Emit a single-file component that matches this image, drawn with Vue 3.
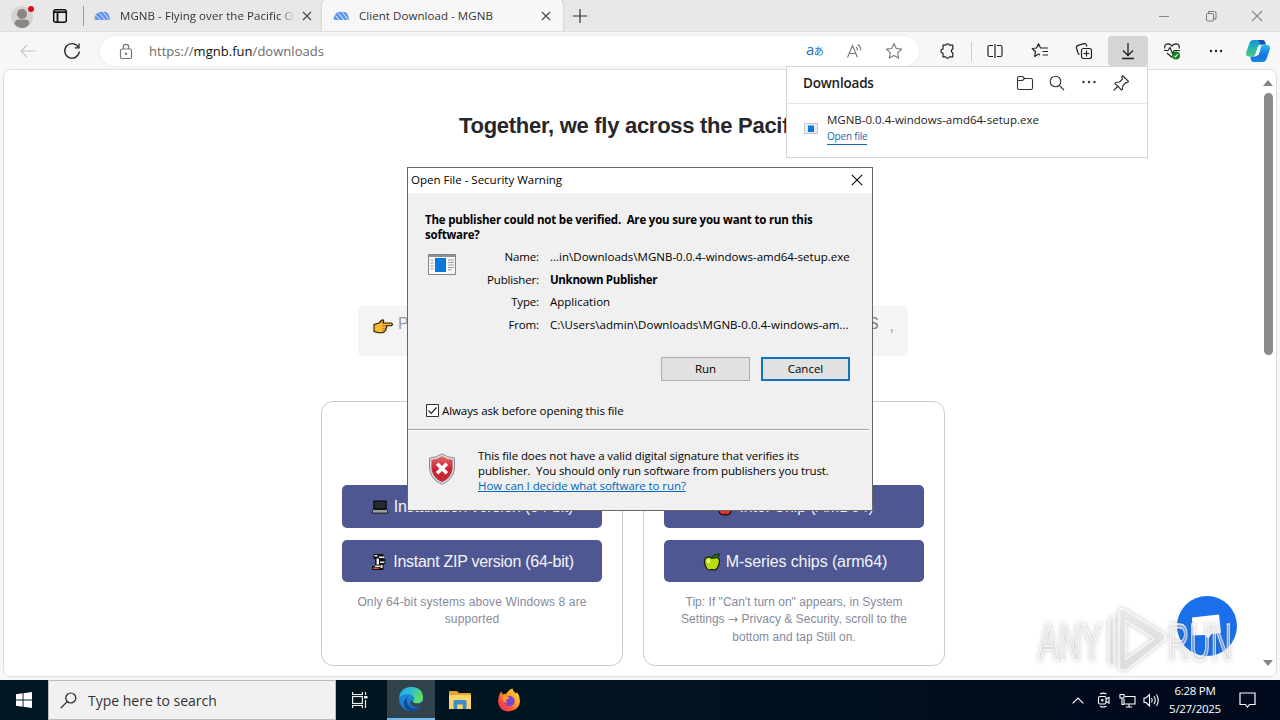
<script setup>
const details = [
  { label: 'Name:', value: '...in\\Downloads\\MGNB-0.0.4-windows-amd64-setup.exe', cls: 'name' },
  { label: 'Publisher:', value: 'Unknown Publisher', cls: 'strong' },
  { label: 'Type:', value: 'Application', cls: 'type' },
  { label: 'From:', value: 'C:\\Users\\admin\\Downloads\\MGNB-0.0.4-windows-am...', cls: 'from' },
]
</script>

<template>
  <div class="screen">
    <header class="tabstrip">
      <svg class="avatar" width="26" height="28" viewBox="0 0 26 28">
        <circle cx="12" cy="15" r="11" fill="#d6d3d1" />
        <circle cx="12" cy="12" r="5" fill="#8c8683" />
        <path d="M4.500 22 q0-4.500 4.500-4.500 h6 q4.500 0 4.500 4.500 q-3 4-7.500 4 t-7.500-4z" fill="#8c8683" />
        <circle cx="21" cy="7" r="3" fill="#e00b1c" />
      </svg>
      <svg class="tabmenu" width="16" height="16" viewBox="0 0 16 16">
        <rect x="1.700" y="1.700" width="12.600" height="12.600" rx="2" fill="none" stroke="#111" stroke-width="1.500" />
        <path d="M1.500 4.200h13M5.500 4v10" stroke="#111" stroke-width="1.800" />
      </svg>
      <i class="sep"></i>
      <div class="tab idle">
        <svg class="fav" width="17" height="10" viewBox="0 0 17 10"><path d="M.5 8.500Q1 2 5.500 1.200 7 .200 9 1.200q2-1.200 4 .3 2.500 2 3 7Q15 9.500 13 8.800 11 9.500 9 8.800 5 9.500.5 8.500z" fill="#5f95ef" /><path d="M2.500 4.500l4 5M5.500 2.500l6 7M9.500 1.500l5.500 7" stroke="#e8e8e8" stroke-width="1" /></svg>
        <span class="tabtitle one">MGNB - Flying over the Pacific O</span>
        <svg class="x" width="10" height="10" viewBox="0 0 10 10"><path d="M1 1l8 8M9 1l-8 8" stroke="#444" stroke-width="1.100" /></svg>
      </div>
      <div class="tab active">
        <svg class="fav" width="17" height="10" viewBox="0 0 17 10"><path d="M.5 8.500Q1 2 5.500 1.200 7 .200 9 1.200q2-1.200 4 .3 2.500 2 3 7Q15 9.500 13 8.800 11 9.500 9 8.800 5 9.500.5 8.500z" fill="#5f95ef" /><path d="M2.500 4.500l4 5M5.500 2.500l6 7M9.500 1.500l5.500 7" stroke="#f7f7f7" stroke-width="1" /></svg>
        <span class="tabtitle two">Client Download - MGNB</span>
        <svg class="x" width="10" height="10" viewBox="0 0 10 10"><path d="M1 1l8 8M9 1l-8 8" stroke="#444" stroke-width="1.100" /></svg>
      </div>
      <svg class="plus" width="14" height="14" viewBox="0 0 14 14"><path d="M7 0v14M0 7h14" stroke="#333" stroke-width="1.200" /></svg>
      <div class="wincontrols">
        <svg width="12" height="12" viewBox="0 0 12 12"><path d="M1 6.500h10" stroke="#888" /></svg>
        <svg width="12" height="12" viewBox="0 0 12 12" fill="none" stroke="#777"><rect x="1.500" y="3.500" width="7" height="7.500" rx="1" /><path d="M3.500 3V1.500h6q1.500 0 1.500 1.500v6h-2" /></svg>
        <svg width="12" height="12" viewBox="0 0 12 12"><path d="M1 1l10 10M11 1L1 11" stroke="#888" stroke-width="1.100" /></svg>
      </div>
    </header>

    <nav class="toolbar">
      <svg class="back" width="16" height="14" viewBox="0 0 16 14" fill="none" stroke="#c6c6c6" stroke-width="1.100"><path d="M7 1L1 7l6 6M1 7h15" /></svg>
      <svg class="reload" width="18" height="18" viewBox="0 0 18 18" fill="none" stroke="#222" stroke-width="1.300"><path d="M15.400 5.300A7.300 7.300 0 1 0 16.300 9.500" /><path d="M16 1.500v4.300h-4.300" /></svg>
      <div class="address">
        <svg class="lock" width="14" height="17" viewBox="0 0 14 17" fill="none" stroke="#777" stroke-width="1.200"><rect x="1.500" y="6" width="11" height="9.500" rx="1.500" /><path d="M4.300 6V4q0-2.600 2.700-2.600T9.700 4v2" /><circle cx="7" cy="10.700" r=".6" fill="#777" /></svg>
        <span class="url">https://<b>mgnb.fun</b>/downloads</span>
        <span class="translate">a<small>あ</small></span>
        <svg class="addricon" width="18" height="16" viewBox="0 0 18 16" fill="none" stroke="#777" stroke-width="1.100"><path d="M1.500 14.500L6.500 2.500l5 12M3.200 10.500h6.600M10 4q1.500 1.300 1.500 3.500M12 1.500q3 2.500 2.800 6" /></svg>
        <svg class="addricon" width="18" height="18" viewBox="0 0 18 18" fill="none" stroke="#777" stroke-width="1.100" stroke-linejoin="round"><path d="M9 1.500l2.300 5 5.300.6-4 3.700 1.100 5.300L9 13.400l-4.700 2.700 1.100-5.300-4-3.700 5.300-.6z" /></svg>
      </div>
      <div class="tools">
        <span class="tool"><svg width="18" height="18" viewBox="0 0 18 18" fill="none" stroke="#222" stroke-width="1.200" stroke-linejoin="round"><path d="M5 3.200h2.700a2 2 0 0 1 3.800 0h3.300v4a1.900 1.900 0 0 0 0 3.700v4h-3.300a2 2 0 0 1-3.800 0H5v-3.700a2 2 0 1 1 0-4.100z" /></svg></span>
        <i class="line"></i>
        <span class="tool"><svg width="18" height="16" viewBox="0 0 18 16" fill="none" stroke="#222" stroke-width="1.200"><path d="M7 2.500H3.500q-1.500 0-1.500 1.500v8q0 1.500 1.500 1.500H7M9 1v14M11 2.500h3.500Q16 2.500 16 4v8q0 1.500-1.500 1.500H11" /></svg></span>
        <span class="tool gap5"><svg width="18" height="18" viewBox="0 0 18 18" fill="none" stroke="#222" stroke-width="1.200" stroke-linejoin="round"><path d="M12 6H9.500L7.500 1.700 5.500 6l-4.300.5 3.300 3.200-.9 4.800 3.900-2.500 1.500 1M11 6h6M11.500 9.500H17M11.500 13H17" /></svg></span>
        <span class="tool gap4"><svg width="18" height="18" viewBox="0 0 18 18" fill="none" stroke="#222" stroke-width="1.200"><rect x="6.500" y="6.500" width="10" height="10" rx="2" /><path d="M11.500 8.500v6M8.500 11.500h6M4.500 12.500q-1.200-.5-1.700-2L1.500 6q-.5-2 1.500-2.600l6-1.700q2-.4 2.600 1.400l.4 1.400" /></svg></span>
        <span class="tool gap4 pressed"><svg width="14" height="18" viewBox="0 0 14 18" fill="none" stroke="#222" stroke-width="1.300"><path d="M7 1v12M2 8.500l5 5 5-5M1 16.500h12" /></svg></span>
        <span class="tool gap4"><svg width="18" height="18" viewBox="0 0 18 18" fill="none" stroke="#222" stroke-width="1.200"><path d="M2 6.500Q.7 2 5 1.800 7.500 1.800 9 4q1.500-2.200 4-2.200Q17.300 2 16 6.500M1 8.500h4l2-3 2.500 6 1.700-3H17M4 11l5 4.500" /><circle cx="13" cy="13.500" r="4" fill="#187a1e" stroke="none" /><path d="M11.200 13.700l1.300 1.200 2.400-2.700" stroke="#d9f0d9" /></svg></span>
        <span class="tool gap4"><svg width="14" height="4" viewBox="0 0 14 4" fill="#222"><circle cx="2" cy="2" r="1.200" /><circle cx="7" cy="2" r="1.200" /><circle cx="12" cy="2" r="1.200" /></svg></span>
        <span class="tool copilot"><svg width="24" height="22" viewBox="0 0 24 22">
          <defs>
            <linearGradient id="cpa" x1="0" y1="0" x2="0" y2="1"><stop offset="0" stop-color="#1a8fd8" /><stop offset=".5" stop-color="#22b8b4" /><stop offset="1" stop-color="#58c878" /></linearGradient>
            <linearGradient id="cpb" x1="0" y1="0" x2="0" y2="1"><stop offset="0" stop-color="#27b8ee" /><stop offset=".6" stop-color="#1672de" /><stop offset="1" stop-color="#1687e4" /></linearGradient>
          </defs>
          <path d="M7.500 0h9q2 0 2.500 2l.8 2.500H15q-2.500 0-3.200 2.500L9.500 14q-.8 2.500-3.500 2.500H3Q-.8 16.500.3 12L3.500 3Q4.500 0 7.500 0z" fill="url(#cpa)" />
          <path d="M16.500 22h-9q-2 0-2.500-2l-.8-3.500H9q2.500 0 3.200-2.500L14.500 7q.8-2 3.500-2h3q3.800 0 2.700 4.500L20.500 19q-1 3-4 3z" fill="url(#cpb)" />
          <path d="M11.800 7h3.300l-2.500 8H9.300z" fill="#fff" />
          <path d="M12 0h4.500q2 0 2.500 2l.8 2.500H14Q13.500 1 12 0z" fill="#1455b4" />
        </svg></span>
      </div>
    </nav>

    <main class="viewport">
      <div class="page">
        <h1>Together, we fly across the Pacific</h1>
        <div class="notice">
          <svg width="20" height="15" viewBox="0 0 20 15"><path d="M1 5.500l5-1.500 3-3q2-.5 1.600 1.500L10 4h8q1.500.3 1.400 1.400T18 6.800h-5q1 .5.700 1.700-.2.700-.8.900.5 2-1.100 2.400-.2 1.900-2 2H5.500L1 12.500z" fill="#fcb92c" stroke="#1a1206" stroke-width="1.100" stroke-linejoin="round" /><path d="M9 6.800h4M9.500 9.400h3M9 11.800h2.500" stroke="#a15a0b" stroke-width=".7" /></svg>
          <span class="first">P</span><span class="last">S</span><span class="comma">,</span>
        </div>
        <div class="cards">
          <section class="card">
            <a class="btn"><svg class="emoji" width="18" height="16" viewBox="0 0 18 16"><path d="M3 2h12v8H3z" fill="#262a31" stroke="#000" stroke-width="1.200" /><path d="M2.500 10.500h13l2 3.500H.500z" fill="#c4c6cb" stroke="#111" /><path d="M3 12h12" stroke="#777" /></svg>Installation version (64-bit)</a>
            <a class="btn"><svg class="emoji" width="18" height="18" viewBox="0 0 18 18"><path d="M3.500 1h10v5h2v5h-2v6H2v-4h3V6H3.500z" fill="#111" /><path d="M4.500 2h3v1.500h-3zM9 3.500h5v1.500H9zM6.500 5.500h2.500v6H6.500zM10 8.500h4.500V10H10zM10.500 12h2v3h-2z" fill="#eceef1" /><path d="M3 14.500h6v1.500H3z" fill="#c9583b" /><path d="M5 12.500h5V14H5z" fill="#e6dcd8" /></svg>Instant ZIP version (64-bit)</a>
            <p>Only 64-bit systems above Windows 8 are<br />supported</p>
          </section>
          <section class="card mac">
            <a class="btn"><svg class="emoji" width="18" height="18" viewBox="0 0 18 18"><path d="M9 5Q12 3 14.500 4.500 17.500 6.500 16 11q-1.500 5-4 6l-3-.7-2.500.7q-3.500-1-4.500-6Q.5 6.500 3.500 4.500 6 3 9 5z" fill="#dd3527" stroke="#16100a" stroke-width="1.200" /><path d="M9 5Q9 1 14 1q0 4-5 4z" fill="#327c22" /></svg>Intel Chip (AMD64)</a>
            <a class="btn"><svg class="emoji" width="18" height="18" viewBox="0 0 18 18"><path d="M9 5Q12 3 14.500 4.500 17.500 6.500 16 11q-1.500 5.500-4.500 6l-2.500-.7-2.500.7q-3.500-.5-4.500-6Q.5 6.500 3.500 4.500 6 3 9 5z" fill="#b5dd10" stroke="#111a05" stroke-width="1.200" /><circle cx="5.500" cy="8" r="2" fill="#eefa96" /><path d="M8.500 5.500Q9 1 16.500 1q0 4.500-8 4.500z" fill="#1f6b22" stroke="#0d2a0a" stroke-width=".8" /></svg>M-series chips (arm64)</a>
            <p>Tip: If "Can't turn on" appears, in System<br />Settings <span class="arrow">→</span> Privacy &amp; Security, scroll to the<br />bottom and tap Still on.</p>
          </section>
        </div>
      </div>
      <div class="scrollbar">
        <svg width="10" height="6" viewBox="0 0 10 6"><path d="M0 6l5-6 5 6z" fill="#868686" /></svg>
        <i class="thumb"></i>
        <svg width="10" height="6" viewBox="0 0 10 6"><path d="M0 0l5 6 5-6z" fill="#868686" /></svg>
      </div>
    </main>

    <footer class="taskbar">
      <span class="start"><svg width="16" height="16" viewBox="0 0 16 16" fill="#fff"><path d="M0 2.200L6.600 1.300v6.200H0zM7.500 1.200L16 0v7.500H7.500zM0 8.400h6.600v6.300L0 13.800zM7.500 8.400H16V16l-8.500-1.200z" /></svg></span>
      <div class="search">
        <svg width="17" height="17" viewBox="0 0 17 17" fill="none" stroke="#222" stroke-width="1.200"><circle cx="10.800" cy="6" r="5" /><path d="M7.200 9.700L.700 16.200" /></svg>
        <span>Type here to search</span>
      </div>
      <span class="app taskview"><svg width="18" height="16" viewBox="0 0 18 16" fill="none" stroke="#e8eef0" stroke-width="1.200"><path d="M1.600 0v2.500h9.800V0M1.600 16v-2.500h9.800V16M14.500 0v3M14.500 8v8" /><rect x="1.600" y="4.500" width="9.800" height="7" /><path d="M13 4h3.500v2.500H13z" fill="#e8eef0" stroke="none" /></svg></span>
      <span class="app running"><svg width="26" height="26" viewBox="0 0 26 26">
        <defs>
          <linearGradient id="eda" x1="0" y1="0" x2="1" y2=".4"><stop offset="0" stop-color="#20a4e4" /><stop offset=".5" stop-color="#2bc2d4" /><stop offset="1" stop-color="#64dc60" /></linearGradient>
          <linearGradient id="edb" x1="0" y1="0" x2="0" y2="1"><stop offset="0" stop-color="#1c94dd" /><stop offset="1" stop-color="#1375cc" /></linearGradient>
        </defs>
        <circle cx="13" cy="13" r="12" fill="url(#edb)" />
        <path d="M1.200 11Q3 1 13 1q11.500 0 12 10.500 0 5.500-6 6-4 0-4.500-2 2-1.500 1.500-4Q14.500 8 10 8q-6 0-8.800 3z" fill="url(#eda)" />
        <path d="M10 10.500q-3 5 1 9.500 4.500 4.500 11 1-4 4-9 4-6-1-7-7-.2-5 4-7.500z" fill="#0e4a94" />
        <path d="M14.300 14q.5 3.500 5 3.500 3 0 5.500-2-.2 4-3 5.500-5 1.500-8.500-1.500-2.500-3 1-5.500z" fill="#304a55" />
      </svg></span>
      <span class="app"><svg width="22" height="20" viewBox="0 0 22 20"><path d="M0 2q0-1 1-1h7l2 2h11q1 0 1 1v14H0z" fill="#e7a12d" /><path d="M0 5h22v14H0z" fill="#fbd568" /><path d="M4.500 19v-7.500q0-1.500 1.500-1.500h10q1.500 0 1.500 1.500V19h-3.800v-4.500H8.300V19z" fill="#3a8ecb" /></svg></span>
      <span class="app firefox"><svg width="24" height="24" viewBox="0 0 24 24">
        <defs><linearGradient id="ffx" x1="1" y1="0" x2="0" y2="1"><stop offset="0" stop-color="#ffe53e" /><stop offset=".4" stop-color="#ffa029" /><stop offset=".7" stop-color="#fb4b3f" /><stop offset="1" stop-color="#e52a72" /></linearGradient></defs>
        <path d="M4 3.500l2 3Q7.500 5.500 9 6q2-4 6.500-5.500Q15.500 3 19 5.500q1-.5 1-1.500 3 4 3 9-.5 9.500-11 10.500Q1.500 23 1 13q0-5 3-9.500z" fill="url(#ffx)" />
        <circle cx="12.500" cy="13" r="5.200" fill="#7a45d8" />
        <path d="M5 9.500q4-3 7.500 0-.5 1.500-3 2-1 1.500.5 3.500-4-.500-5-5.500z" fill="#ff9a2a" />
      </svg></span>
      <div class="tray">
        <svg width="12" height="7" viewBox="0 0 12 7" fill="none" stroke="#fff" stroke-width="1.200"><path d="M.7 6.300L6 1l5.300 5.300" /></svg>
        <svg class="t2" width="14" height="16" viewBox="0 0 14 16" fill="none" stroke="#fff" stroke-width="1.100"><rect x="1.500" y="4.500" width="7.500" height="7.500" rx="1.500" /><path d="M9 7l3-1.500v5.500L9 9.500M3 2Q6 .3 9.500 2M3 14.200q3 1.600 6.500 0" /><circle cx="5.300" cy="8.200" r=".7" /></svg>
        <svg class="t3" width="17" height="15" viewBox="0 0 17 15" fill="none" stroke="#fff" stroke-width="1.100"><path d="M6 3.500h10v7.500H5V6M10 11v3M7 14h6M1 1.500h4v3.500H1zM3 5v6.500h2" /></svg>
        <svg class="t4" width="17" height="14" viewBox="0 0 17 14" fill="none" stroke="#fff" stroke-width="1.100"><path d="M1 5v4.500h2L6.500 13V1.500L3 5zM8.500 5q1.300 2 0 4.500M11 3.200q2.500 4 0 8M13.500 1.500q3.500 5.500 0 11.500" /></svg>
        <div class="clock"><span class="time">6:28 PM</span><span>5/27/2025</span></div>
        <svg class="t5" width="17" height="16" viewBox="0 0 17 16" fill="none" stroke="#fff" stroke-width="1.200"><path d="M1 1h15v11.500h-5.500L8.500 15l-2-2.500H1z" /></svg>
      </div>
    </footer>

    <aside class="chat"><svg width="60" height="60" viewBox="0 0 60 60"><circle cx="30" cy="30" r="30" fill="#1a70ec" /><path d="M15 21.500l27-3 2 18.500-9.500 1-3 4.500-4-3.500-12 .5z" fill="#fff" /></svg></aside>

    <svg class="watermark" width="236" height="76" viewBox="0 0 236 76">
      <defs><linearGradient id="wm" x1="0" y1="0" x2="0" y2="1"><stop offset="0" stop-color="#fff" stop-opacity=".5" /><stop offset="1" stop-color="#ddd" stop-opacity=".35" /></linearGradient></defs>
      <g fill="url(#wm)" stroke="#fff" stroke-opacity=".8" stroke-width="1.300">
        <text transform="translate(5 56) scale(.6 1)">ANY</text>
        <text transform="translate(135 56) scale(.568 1)">RUN</text>
        <path fill-rule="evenodd" d="M76 15l5-3v50l-5-3zM86 9q0-6 5-4l39 24q5 4 0 8L95 65q-9 4-9-3zM93 17v38l28-20z" />
      </g>
    </svg>

    <section class="downloads">
      <div class="dlhead">
        <strong>Downloads</strong>
        <svg width="18" height="16" viewBox="0 0 18 16" fill="none" stroke="#333" stroke-width="1.100"><path d="M1.500 3Q1.500 1.500 3 1.500h3.500l2 2H15q1.500 0 1.500 1.500v8q0 1.500-1.500 1.500H3Q1.500 14.500 1.500 13zM1.500 5.500h5l2-2" /></svg>
        <svg width="16" height="16" viewBox="0 0 16 16" fill="none" stroke="#333" stroke-width="1.100"><circle cx="6.500" cy="6.500" r="5.300" /><path d="M10.300 10.300L15 15" /></svg>
        <svg width="16" height="16" viewBox="0 0 16 16" fill="#333"><circle cx="2.500" cy="7" r="1.200" /><circle cx="8" cy="7" r="1.200" /><circle cx="13.500" cy="7" r="1.200" /></svg>
        <svg width="18" height="18" viewBox="0 0 18 18" fill="none" stroke="#333" stroke-width="1.100" stroke-linejoin="round"><path d="M10.500 1.500l6 6-1.300 1.200-1.200-.2-3 3-.5 3.500-1 1L3 9.500l1-1 3.500-.5 3-3-.8-2zM5.700 12.500L1.500 16.500" /></svg>
      </div>
      <div class="dlitem">
        <svg width="14" height="11" viewBox="0 0 14 11"><path d="M.5.5h13v10H.500z" fill="#e9edf1" stroke="#c0c6ca" /><path d="M4 2.500h6v6.500H4z" fill="#0f7ad8" /></svg>
        <div><span class="file">MGNB-0.0.4-windows-amd64-setup.exe</span><a>Open file</a></div>
      </div>
    </section>

    <section class="dialog">
      <div class="titlebar"><span>Open File - Security Warning</span><svg width="12" height="12" viewBox="0 0 12 12"><path d="M.8.8l10.400 10.400M11.200.8L.8 11.200" stroke="#111" stroke-width="1.200" /></svg></div>
      <h2><span class="h1st">The publisher could not be verified.&nbsp; Are you sure you want to run this</span><br />software?</h2>
      <div class="info">
        <svg class="exe" width="28" height="21" viewBox="0 0 28 21"><path d="M.5.5h27v20H.5z" fill="#f8f8f8" stroke="#7f868b" /><path d="M1 1h26v2H1z" fill="#8a9196" /><path d="M7 4h11v14H7z" fill="#0878da" /><path d="M2.500 6h3M2.500 9h3M2.500 12h3M2.500 15h3M20 6h6M20 8.500h6M20 11h6M20 13.500h6M20 16h4" stroke="#9a9a9a" /></svg>
        <dl>
          <template v-for="d in details" :key="d.label"><dt>{{ d.label }}</dt><dd :class="d.cls">{{ d.value }}</dd></template>
        </dl>
      </div>
      <div class="actions"><button>Run</button><button class="default">Cancel</button></div>
      <label class="check"><svg width="13" height="13" viewBox="0 0 13 13"><path d="M.5.5h12v12H.500z" fill="#fff" stroke="#333" /><path d="M2.500 6.500l2.700 2.800L10.500 3.500" fill="none" stroke="#222" stroke-width="1.200" /></svg><span>Always ask before opening this file</span></label>
      <div class="warn">
        <svg width="28" height="32" viewBox="0 0 28 32">
          <defs><linearGradient id="shd" x1="0" y1="0" x2="0" y2="1"><stop offset="0" stop-color="#e5686b" /><stop offset=".5" stop-color="#cc2433" /><stop offset="1" stop-color="#c02a38" /></linearGradient></defs>
          <path d="M14 .8Q19 4.500 26.500 5v11Q25 27 14 31.300 3 27 1.500 16V5Q9 4.500 14 .8z" fill="#d5d5d7" stroke="#8f8f92" />
          <path d="M14 3.200Q19 6.500 24.500 6.800V16Q23 25.500 14 29 5 25.500 3.500 16V6.800Q9 6.500 14 3.200z" fill="url(#shd)" />
          <path d="M9.200 10.700l9.600 9.600M18.800 10.700l-9.600 9.600" stroke="#fff" stroke-width="3.600" />
        </svg>
        <p><span class="w1">This file does not have a valid digital signature that verifies its</span><br /><span class="w2">publisher.&nbsp; You should only run software from publishers you trust.</span><br /><a>How can I decide what software to run?</a></p>
      </div>
    </section>
  </div>
</template>

<style>
html, body { margin: 0; overflow: hidden; background: #f7f7f7; }
</style>

<style scoped>
* { box-sizing: border-box; }
.screen { position: relative; width: 1280px; height: 720px; display: flex; flex-direction: column; overflow: hidden; background: #f7f7f7; font-family: "Open Sans", "Noto Sans", sans-serif; font-size: 12px; color: #111; white-space: nowrap; }
svg { display: block; flex: none; }

.tabstrip { height: 32px; flex: none; display: flex; align-items: center; background: #e8e8e8; border-bottom: 1px solid #dedede; }
.avatar { margin-left: 10px; }
.tabmenu { margin-left: 16px; }
.sep { width: 1px; height: 20px; margin-left: 15px; background: #999; }
.tab { display: flex; align-items: center; height: 32px; font-size: 11.5px; color: #333; }
.idle { width: 238px; padding-left: 10px; }
.active { width: 241px; padding-left: 11px; background: #f7f7f7; border-radius: 6px 6px 0 0; box-shadow: 0 0 2px #aaa; height: 33px; clip-path: inset(0 -3px 1px -3px); }
.tabtitle { margin-left: 9px; }
.one { width: 175px; letter-spacing: .06px; overflow: hidden; -webkit-mask-image: linear-gradient(90deg, #000 91%, transparent 100%); }
.two { width: 182px; letter-spacing: .06px; }
.tab .x { margin-left: 7px; }
.active .x { margin-left: 0; }
.plus { margin-left: 10px; }
.wincontrols { display: flex; gap: 34.500px; margin-left: auto; margin-right: 17px; }

.toolbar { height: 37px; flex: none; display: flex; align-items: center; padding-top: 1px; }
.back { margin-left: 20px; }
.reload { margin-left: 27px; }
.address { width: 819px; height: 30px; margin-left: 19px; padding: 0 16px 0 19px; display: flex; align-items: center; border-radius: 15px; background: #fff; box-shadow: 0 0 3px #e4e4e4; }
.url { margin: 0 auto 0 16px; font-size: 13px; color: #6b6b6b; letter-spacing: .03px; }
.url b { font-weight: 400; color: #111; }
.translate { width: 22px; margin-top: -4px; color: #1b71c5; font-size: 15px; line-height: 20px; letter-spacing: -.5px; }
.translate small { font: 10px "Noto Sans CJK JP", sans-serif; }
.addricon { margin-left: 18px; }
.addricon + .addricon { margin-left: 21px; }
.tools { display: flex; align-items: center; margin-left: 8px; }
.tool { width: 40px; height: 30px; display: grid; place-items: center; border-radius: 4px; }
.line { width: 1px; height: 19px; margin: 0 3px 0 4px; background: #ccc; }
.gap5 { margin-left: 5px; }
.gap4 { margin-left: 4px; }
.pressed { background: #d5d5d5; }
.copilot { margin-left: 2px; }

.viewport { height: 608px; flex: none; margin: 0 3px; display: flex; background: #fff; border: 1px solid #dfdfdf; border-radius: 8px; font-family: "Liberation Sans", Arial, sans-serif; }
.page { width: 1258px; display: flex; flex-direction: column; align-items: center; }
h1 { margin: 42px 0 0; font-size: 22px; line-height: 28px; font-weight: 700; letter-spacing: -.28px; color: #25272c; }
.notice { width: 550px; height: 50px; margin-top: 166px; padding: 9px 14px; display: flex; align-items: flex-start; background: #f4f4f5; border-radius: 5px; font-size: 16px; line-height: 18px; color: #9a9ba3; }
.notice svg { margin: 4px 0 0 1px; }
.first { margin-left: 5px; }
.last { margin-left: auto; color: #808087; }
.comma { margin: 2px 0 0 11px; }
.cards { display: flex; gap: 20px; margin-top: 45px; }
.card { width: 302px; height: 265px; padding: 83px 20px 0; border: 1px solid #cbcbcd; border-radius: 12px; }
.btn { display: flex; align-items: center; justify-content: center; height: 43px; padding-top: 1px; border-radius: 5px; background: #4e5792; color: #f3f4fa; font-size: 16px; letter-spacing: -.28px; }
.mac .btn { padding-left: 2px; letter-spacing: -.1px; }
.btn + .btn { margin-top: 12px; height: 42px; }
.emoji { margin-right: 5px; }
.card p { margin: 11.500px 0 0; text-align: center; font-size: 12px; line-height: 17.500px; color: #858a9d; letter-spacing: .13px; }
.card.mac p { letter-spacing: .03px; }
.arrow { font-family: "DejaVu Sans", sans-serif; line-height: 1; }
.scrollbar { width: 10px; margin-left: 1px; padding: 10px 0; display: flex; flex-direction: column; align-items: center; }
.thumb { width: 9px; height: 262px; margin: 7px 0 auto; border-radius: 5px; background: #8b8b8b; }

.taskbar { height: 40px; margin-top: auto; display: flex; background: linear-gradient(90deg, #011722 0, #00131e 55%, #020b1d 85%); }
.start { width: 48px; display: grid; place-items: center; }
.search { width: 288px; display: flex; align-items: center; gap: 11px; padding-left: 11px; background: #f1f1f1; border: 1px solid #bbb; font-size: 14px; color: #333; }
.app { width: 49px; padding-right: 1px; display: grid; place-items: center; }
.taskview { width: 51px; padding-right: 3px; }
.running { width: 48px; background: #30434c; border-bottom: 2px solid #76b9ed; }
.app.running + .app { width: 50px; }
.tray { margin-left: auto; display: flex; align-items: center; margin-right: 24px; color: #fff; }
.t2 { margin-left: 13px; }
.t3 { margin-left: 8px; }
.t4 { margin-left: 7px; }
.clock { width: 54px; margin-left: 8px; display: flex; flex-direction: column; align-items: center; font-size: 11.500px; line-height: 18px; letter-spacing: -.3px; }
.t5 { margin-left: 17px; }

.chat { position: absolute; left: 1177px; top: 596px; }
.watermark { position: absolute; left: 1033px; top: 604px; filter: drop-shadow(0 0 2px rgba(80, 80, 80, .5)); }
.watermark text { font: 52px "Liberation Sans", Arial, sans-serif; }

.downloads { position: absolute; left: 786px; top: 66px; width: 362px; height: 92px; background: #fff; border: 1px solid #d5d5d5; }
.dlhead { height: 37px; display: flex; align-items: center; padding: 0 17px 4px 16px; border-bottom: 1px solid #e5e5e5; }
.dlhead strong { margin-right: auto; font-size: 13.500px; font-weight: 600; letter-spacing: -.2px; color: #222; }
.dlhead svg + svg { margin-left: 15.500px; }
.dlitem { display: flex; align-items: center; padding: 7px 0 0 17px; gap: 9px; }
.dlitem svg { margin-top: 1px; }
.dlitem div { display: flex; flex-direction: column; align-items: flex-start; }
.file { font-size: 11.500px; line-height: 18px; color: #222; }
.dlitem a { font-size: 10px; line-height: 15px; color: #1567b5; border-bottom: 1px solid #1567b5; letter-spacing: -.2px; }

.dialog { position: absolute; left: 407px; top: 167px; width: 466px; height: 344px; border: 1px solid #666; background: #f0f0f0; font-size: 11.500px; color: #000; }
.titlebar { height: 25px; padding: 0 9px 1px 3px; display: flex; align-items: center; justify-content: space-between; background: #fff; }
.titlebar span { padding-bottom: 2px; }
h2 { margin: 19px 0 0 17px; font-size: 11.500px; line-height: 15px; font-weight: 700; letter-spacing: -.22px; }
.h1st { letter-spacing: -.19px; }
.info { display: flex; margin-top: 4px; padding-left: 20px; }
.exe { margin-top: 8px; }
dl { margin: 0; display: grid; grid-template-columns: 83px auto; column-gap: 11px; grid-auto-rows: 22.600px; line-height: 22.600px; }
dt { text-align: right; letter-spacing: -.15px; }
dd { margin: 0; letter-spacing: .01px; }
.from { letter-spacing: .04px; }
.strong { font-weight: 700; letter-spacing: -.33px; }
.actions { display: flex; gap: 11px; justify-content: flex-end; margin-top: 21px; padding-right: 22px; }
button { width: 89px; height: 24px; padding: 0 0 2px; border: 1px solid #adadad; background: #e1e1e1; color: #000; font: 11.500px "Open Sans", sans-serif; }
.default { border: 2px solid #0f73c0; }
.check { display: flex; align-items: center; gap: 3px; height: 16px; margin: 21px 0 0 18px; letter-spacing: -.08px; }
.warn { display: flex; gap: 22px; margin: 11px 3px 0 0; padding: 18px 0 0 20px; border-top: 1px solid #a0a0a0; box-shadow: inset 0 1px #fff; }
.warn svg { margin-top: 5px; }
.warn p { margin: 0; line-height: 15px; }
.w1 { letter-spacing: -.095px; }
.w2 { letter-spacing: -.125px; }
.warn a { color: #0066bc; text-decoration: underline; letter-spacing: -.08px; }
</style>
